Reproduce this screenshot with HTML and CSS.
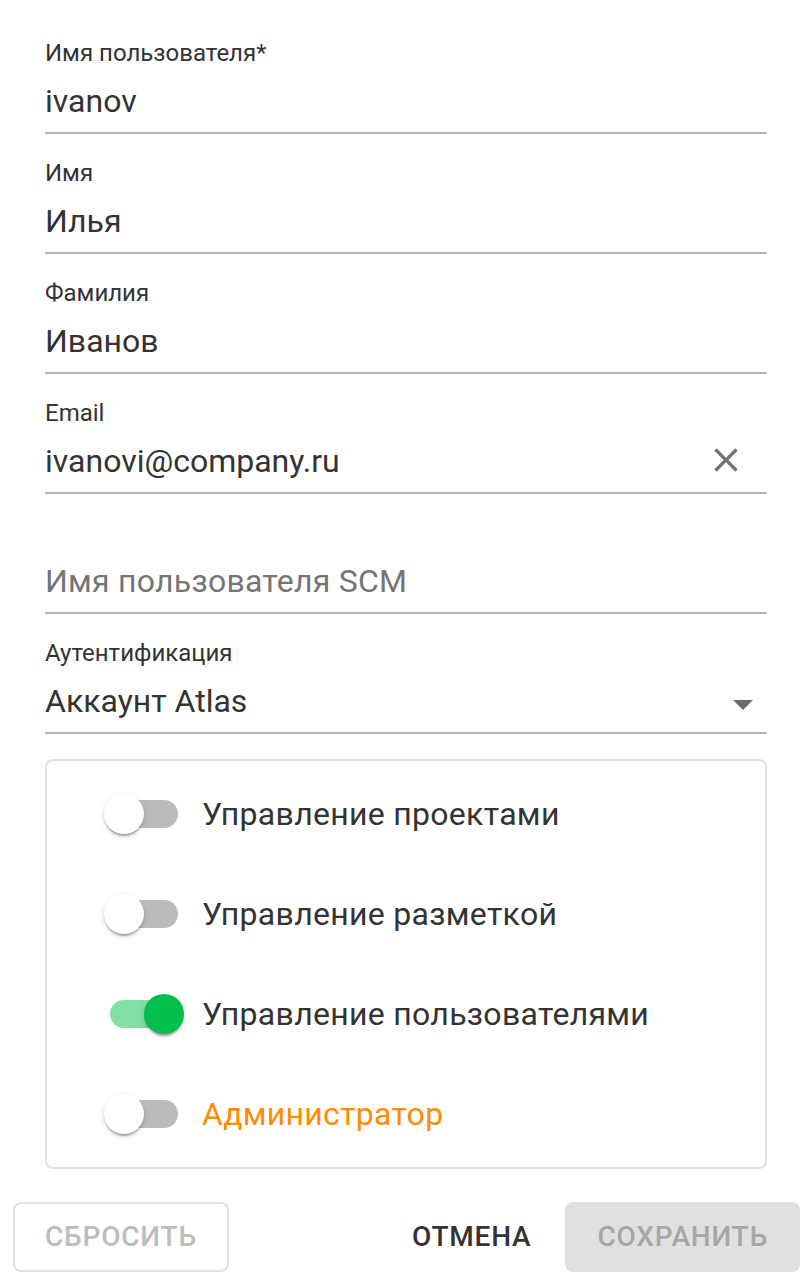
FILE: index.html
```html
<!DOCTYPE html>
<html lang="ru">
<head>
<meta charset="utf-8">
<title>Пользователь</title>
<link rel="stylesheet" href="styles.css">
</head>
<body>
<form class="form">
  <div class="field">
    <label class="label">Имя пользователя*</label>
    <div class="input-row"><span class="value">ivanov</span></div>
  </div>
  <div class="field">
    <label class="label">Имя</label>
    <div class="input-row"><span class="value">Илья</span></div>
  </div>
  <div class="field">
    <label class="label">Фамилия</label>
    <div class="input-row"><span class="value">Иванов</span></div>
  </div>
  <div class="field">
    <label class="label">Email</label>
    <div class="input-row">
      <span class="value">ivanovi@company.ru</span>
      <svg class="clear-icon" viewBox="0 0 24 24" width="40" height="40"><path d="M19 6.41L17.59 5 12 10.59 6.41 5 5 6.41 10.59 12 5 17.59 6.41 19 12 13.41 17.59 19 19 17.59 13.41 12z" fill="#737373"/></svg>
    </div>
  </div>
  <div class="field">
    <div class="label label-empty"></div>
    <div class="input-row"><span class="value placeholder">Имя пользователя SCM</span></div>
  </div>
  <div class="field">
    <label class="label">Аутентификация</label>
    <div class="input-row select-row">
      <span class="value">Аккаунт Atlas</span>
      <svg class="drop-icon" viewBox="0 0 24 24" width="48" height="48"><path d="M7 10l5 5 5-5z" fill="#6b6b6b"/></svg>
    </div>
  </div>

  <div class="roles">
    <div class="role">
      <span class="switch"><span class="track"></span><span class="thumb"></span></span>
      <span class="role-label">Управление проектами</span>
    </div>
    <div class="role">
      <span class="switch"><span class="track"></span><span class="thumb"></span></span>
      <span class="role-label">Управление разметкой</span>
    </div>
    <div class="role">
      <span class="switch on"><span class="track"></span><span class="thumb"></span></span>
      <span class="role-label">Управление пользователями</span>
    </div>
    <div class="role">
      <span class="switch"><span class="track"></span><span class="thumb"></span></span>
      <span class="role-label admin">Администратор</span>
    </div>
  </div>
</form>
<div class="actions">
  <button class="btn btn-outlined" type="button">Сбросить</button>
  <div class="spacer"></div>
  <button class="btn btn-text" type="button">Отмена</button>
  <button class="btn btn-contained" type="button">Сохранить</button>
</div>
</body>
</html>
```
FILE: styles.css
```css
* { box-sizing: border-box; }
html, body { margin: 0; padding: 0; background: #ffffff; }
body {
  font-family: Roboto, "Noto Sans", "Liberation Sans", sans-serif;
  color: #333333;
  width: 810px;
}
.form {
  display: flex;
  flex-direction: column;
  margin: 0;
  padding: 22px 43px 0 45px;
}
.field {
  margin: 16px 0 8px;
  height: 96px;
  display: flex;
  flex-direction: column;
}
.label {
  display: block;
  font-size: 24px;
  line-height: 24px;
  height: 32px;
  padding-top: 3px;
  color: #333333;
}
.input-row {
  position: relative;
  display: flex;
  align-items: center;
  height: 64px;
  padding: 12px 0 12px;
  border-bottom: 2px solid #b4b4b4;
}
.value {
  font-size: 32px;
  line-height: 38px;
  color: #333333;
  flex: 1;
}
.placeholder { color: #757575; letter-spacing: 0.25px; }
.clear-icon {
  position: absolute;
  right: 21px;
  top: 10px;
}
.drop-icon {
  position: absolute;
  right: 0;
  top: 10px;
}
.roles {
  margin-top: 17px;
  border: 2px solid #e2e2e2;
  border-radius: 8px;
  padding: 15px 0 15px 39px;
  display: flex;
  flex-direction: column;
  gap: 24px;
}
.role {
  display: flex;
  align-items: center;
  height: 76px;
}
.switch {
  position: relative;
  width: 116px;
  height: 76px;
  flex: none;
}
.track {
  position: absolute;
  left: 24px;
  right: 24px;
  top: 24px;
  height: 28px;
  border-radius: 14px;
  background: #bbbbbb;
}
.thumb {
  position: absolute;
  left: 18px;
  top: 18px;
  width: 40px;
  height: 40px;
  border-radius: 50%;
  background: #ffffff;
  box-shadow: 0 4px 2px -2px rgba(0,0,0,0.2), 0 2px 2px 0 rgba(0,0,0,0.14), 0 2px 6px 0 rgba(0,0,0,0.12);
}
.switch.on .track { background: #80e0a5; }
.switch.on .thumb { left: 58px; background: #00c04b; }
.role-label {
  font-size: 32px;
  line-height: 38px;
  letter-spacing: 0.3px;
  color: #333333;
}
.role-label.admin { color: #ff8c00; }
.actions {
  display: flex;
  align-items: center;
  padding: 33px 10px 0 13px;
}
.spacer { flex: 1; }
.btn {
  font-family: Roboto, "Noto Sans", "Liberation Sans", sans-serif;
  font-size: 28px;
  font-weight: 500;
  letter-spacing: 0.8px;
  text-transform: uppercase;
  height: 70px;
  border-radius: 8px;
  background: transparent;
  border: 0;
  line-height: 1;
  cursor: pointer;
}
.btn-outlined {
  border: 2px solid #e0e0e0;
  color: #bdbdbd;
  padding: 0 30px;
}
.btn-text {
  color: #333333;
  padding: 0 16px;
}
.btn-contained {
  background: #e0e0e0;
  color: #a6a6a6;
  padding: 0 32px;
  margin-left: 18px;
}
```
